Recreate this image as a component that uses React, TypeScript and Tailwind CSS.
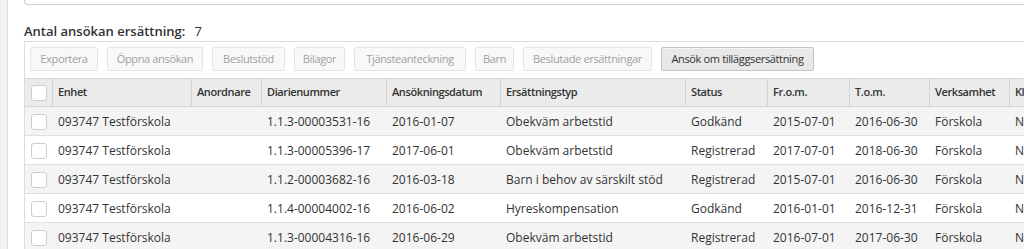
import React from "react";

type Row = {
  unit: string;
  organizer: string;
  caseNo: string;
  applied: string;
  type: string;
  status: string;
  from: string;
  to: string;
  activity: string;
  done: string;
};

const rows: Row[] = [
  { unit: "093747 Testförskola", organizer: "", caseNo: "1.1.3-00003531-16", applied: "2016-01-07", type: "Obekväm arbetstid", status: "Godkänd", from: "2015-07-01", to: "2016-06-30", activity: "Förskola", done: "Nej" },
  { unit: "093747 Testförskola", organizer: "", caseNo: "1.1.3-00005396-17", applied: "2017-06-01", type: "Obekväm arbetstid", status: "Registrerad", from: "2017-07-01", to: "2018-06-30", activity: "Förskola", done: "Nej" },
  { unit: "093747 Testförskola", organizer: "", caseNo: "1.1.2-00003682-16", applied: "2016-03-18", type: "Barn i behov av särskilt stöd", status: "Registrerad", from: "2015-07-01", to: "2016-06-30", activity: "Förskola", done: "Nej" },
  { unit: "093747 Testförskola", organizer: "", caseNo: "1.1.4-00004002-16", applied: "2016-06-02", type: "Hyreskompensation", status: "Godkänd", from: "2016-01-01", to: "2016-12-31", activity: "Förskola", done: "Nej" },
  { unit: "093747 Testförskola", organizer: "", caseNo: "1.1.3-00004316-16", applied: "2016-06-29", type: "Obekväm arbetstid", status: "Registrerad", from: "2016-07-01", to: "2017-06-30", activity: "Förskola", done: "Nej" },
];

const headers = [
  "Enhet",
  "Anordnare",
  "Diarienummer",
  "Ansökningsdatum",
  "Ersättningstyp",
  "Status",
  "Fr.o.m.",
  "T.o.m.",
  "Verksamhet",
  "Klar",
];

const grid =
  "grid grid-cols-[27px_139px_70px_125px_114px_185px_82px_82px_80px_80px_100px]";

const Checkbox = () => (
  <span className="block h-[16px] w-[16px] rounded-[3px] border border-[#cdcdcd] bg-white" />
);

const buttons: { label: string; width: string; active?: boolean }[] = [
  { label: "Exportera", width: "w-[68px]" },
  { label: "Öppna ansökan", width: "w-[96px]" },
  { label: "Beslutstöd", width: "w-[73px]" },
  { label: "Bilagor", width: "w-[51px]" },
  { label: "Tjänsteanteckning", width: "w-[112px]" },
  { label: "Barn", width: "w-[39px]" },
  { label: "Beslutade ersättningar", width: "w-[129px]" },
  { label: "Ansök om tilläggsersättning", width: "w-[153px]", active: true },
];

export default function App() {
  return (
    <div className="flex h-[249px] w-screen overflow-hidden bg-white font-['Open_Sans',sans-serif] text-[#333]">
      {/* side rail */}
      <div className="w-[8px] shrink-0 border-r border-[#dcdcdc] bg-[#f3f3f3]" />

      <div className="flex min-w-0 flex-1 flex-col pl-[16px]">
        {/* bottom edge of the search panel above */}
        <div className="h-[5px] shrink-0 rounded-bl-[4px] border-b border-l border-[#cfcfcf]" />

        <h2 className="mt-[16px] h-[21px] text-[13px] leading-[20px]">
          <span className="font-semibold">Antal ansökan ersättning:</span>
          <span className="ml-[9px]">7</span>
        </h2>

        <div className="w-[1120px] border-l border-t border-[#dcdcdc]">
          {/* toolbar */}
          <div className="flex gap-[9px] pb-[7px] pl-[5px] pt-[5px]">
            {buttons.map((b) => (
              <button
                key={b.label}
                className={
                  b.active
                    ? `${b.width} h-[24px] shrink-0 whitespace-nowrap rounded-[2px] border border-[#c4c4c4] bg-[#e8e8e8] text-center text-[11px] tracking-[-0.35px] text-[#333] shadow-[inset_0_1px_0_#f4f4f4]`
                    : `${b.width} h-[24px] shrink-0 whitespace-nowrap rounded-[2px] border border-[#e4e4e4] bg-[#f8f8f8] text-center text-[11px] tracking-[-0.35px] text-[#a0a0a0]`
                }
              >
                {b.label}
              </button>
            ))}
          </div>

          {/* header */}
          <div className={`${grid} h-[29px] border-y border-[#d6d6d6] bg-[#ebebeb] text-[11px] font-semibold tracking-[-0.4px]`}>
            <div className="flex items-center pl-[6px]">
              <Checkbox />
            </div>
            {headers.map((h) => (
              <div
                key={h}
                className="flex items-center overflow-hidden whitespace-nowrap border-l border-[#d3d3d3] pl-[5px]"
              >
                {h}
              </div>
            ))}
          </div>

          {/* rows */}
          {rows.map((r, i) => (
            <div
              key={r.caseNo}
              className={`${grid} h-[29px] border-b border-[#e0e0e0] pt-[1px] text-[12px] ${
                i % 2 === 0 ? "bg-[#f4f4f4]" : "bg-white"
              }`}
            >
              <div className="flex items-center pl-[6px]">
                <Checkbox />
              </div>
              {[r.unit, r.organizer, r.caseNo, r.applied, r.type, r.status, r.from, r.to, r.activity, r.done].map(
                (v, j) => (
                  <div key={j} className="flex items-center overflow-hidden whitespace-nowrap pl-[6px]">
                    {v}
                  </div>
                )
              )}
            </div>
          ))}
        </div>
      </div>
    </div>
  );
}
